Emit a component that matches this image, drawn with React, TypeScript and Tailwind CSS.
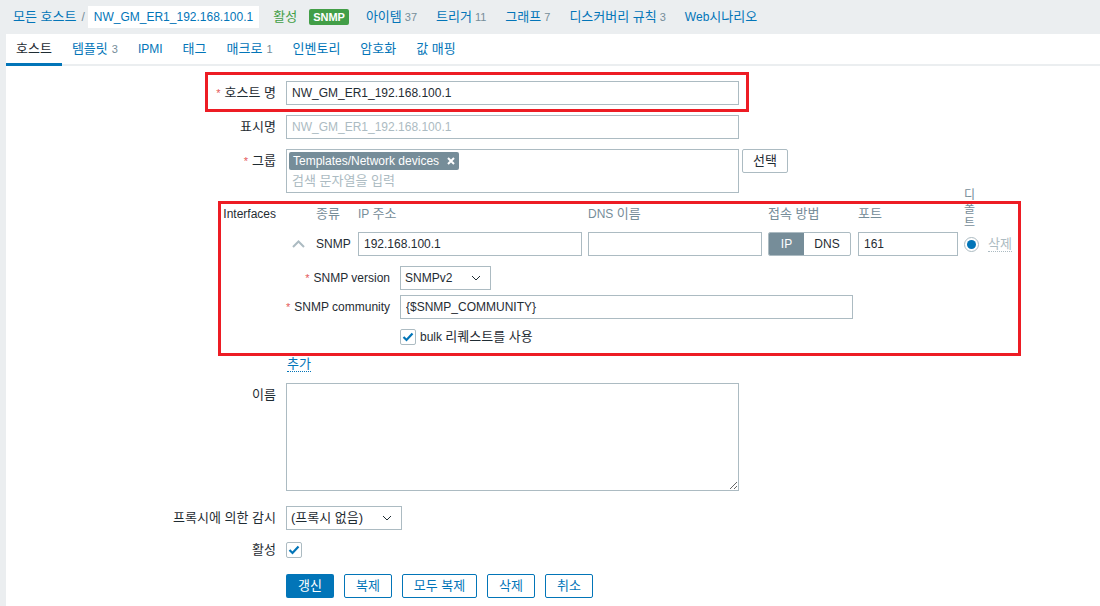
import React from 'react';

// Korean glyphs need to be a touch larger to match the reference widths
const K = ({ children }: { children: React.ReactNode }) => <span className="text-[13px]">{children}</span>;

const Req = () => <span className="text-[#e45959] mr-[4px] text-[11px]">*</span>;

const Row = ({ label, req, children, labelClass = 'pt-[4px]', className = '' }: { label?: React.ReactNode; req?: boolean; children: React.ReactNode; labelClass?: string; className?: string }) => (
  <div className={`flex ${className}`}>
    <div className={`w-[270px] shrink-0 text-right leading-[16px] ${labelClass}`}>
      {req && <Req />}
      {label}
    </div>
    <div className="ml-[10px]">{children}</div>
  </div>
);

const Select = ({ value, width }: { value: React.ReactNode; width: string }) => (
  <div className={`${width} h-[24px] border border-[#acbbc2] bg-white flex items-center justify-between pl-[4px] pr-[9px]`}>
    <span>{value}</span>
    <svg width="10" height="6" viewBox="0 0 10 6">
      <polyline points="1,1 5,5 9,1" fill="none" stroke="#1f2c33" strokeWidth="1" />
    </svg>
  </div>
);

const Check = () => (
  <div className="w-[16px] h-[16px] border border-[#acbbc2] rounded-[2px] bg-white flex items-center justify-center">
    <svg width="12" height="10" viewBox="0 0 12 10">
      <path d="M1.5 5 L4.5 8 L10.5 1.5" fill="none" stroke="#0275b8" strokeWidth="2.2" />
    </svg>
  </div>
);

const navItems: [React.ReactNode, string, string?][] = [
  [<K>아이템</K>, 'items', '37'],
  [<K>트리거</K>, 'triggers', '11'],
  [<K>그래프</K>, 'graphs', '7'],
  [<K>디스커버리 규칙</K>, 'discovery', '3'],
  [<>Web<K>시나리오</K></>, 'web'],
];

const tabs: [string, string?][] = [
  ['호스트'],
  ['템플릿', '3'],
  ['IPMI'],
  ['태그'],
  ['매크로', '1'],
  ['인벤토리'],
  ['암호화'],
  ['값 매핑'],
];

const Btn = ({ children, w, primary }: { children: React.ReactNode; w: string; primary?: boolean }) => (
  <button
    className={`h-[24px] ${w} rounded-[2px] ${primary ? 'bg-[#0275b8] text-white' : 'border border-[#0275b8] text-[#0275b8] bg-white'}`}
  >
    <K>{children}</K>
  </button>
);

export default function App() {
  return (
    <div className="relative w-[1100px] h-[606px] overflow-hidden bg-[#ebeef0] text-[12px] text-[#1f2c33] font-['Liberation_Sans','Noto_Sans_CJK_KR',sans-serif]">
      {/* top bar */}
      <div className="h-[34px] flex items-center pl-[13px]">
        <span className="text-[#0275b8]"><K>모든 호스트</K></span>
        <span className="ml-[5px] mr-[3px] text-[#768d99]">/</span>
        <span className="bg-white h-[22px] flex items-center px-[6px] text-[#0275b8]">NW_GM_ER1_192.168.100.1</span>
        <span className="ml-[14px] text-[#429e47]"><K>활성</K></span>
        <span className="ml-[12px] h-[16px] px-[4px] flex items-center rounded-[2px] bg-[#429e47] text-white font-bold text-[11px]">SNMP</span>
        <div className="ml-[17px] flex items-center gap-[19px]">
          {navItems.map(([name, key, count]) => (
            <span key={key} className="text-[#0275b8]">
              {name}
              {count && <span className="text-[#768d99] ml-[3px] text-[11px]">{count}</span>}
            </span>
          ))}
        </div>
      </div>

      {/* content */}
      <div className="ml-[6px] bg-white h-[572px]">
        <div className="flex h-[32px] border-b-[2px] border-[#ebeef0]">
          {tabs.map(([name, count], i) => (
            <div
              key={name}
              className={`px-[10px] flex items-center ${i === 0 ? 'h-[32px] border-b-[3px] border-[#0275b8] text-[#1f2c33]' : 'h-[30px] text-[#0275b8]'}`}
            >
              {name === 'IPMI' ? name : <K>{name}</K>}
              {count && <span className="text-[#768d99] ml-[4px] text-[11px]">{count}</span>}
            </div>
          ))}
        </div>

        <div className="pt-[15px] flex flex-col">
          <Row label={<K>호스트 명</K>} req>
            <input
              readOnly
              defaultValue="NW_GM_ER1_192.168.100.1"
              className="w-[453px] h-[24px] border border-[#acbbc2] px-[5px] outline-none text-[#1f2c33]"
            />
          </Row>

          <Row label={<K>표시명</K>} className="mt-[10px]">
            <input
              readOnly
              placeholder="NW_GM_ER1_192.168.100.1"
              className="w-[453px] h-[24px] border border-[#acbbc2] px-[5px] outline-none placeholder:text-[#acbbc2]"
            />
          </Row>

          <Row label={<K>그룹</K>} req className="mt-[10px]">
            <div className="flex gap-[3px]">
              <div className="w-[453px] h-[44px] border border-[#acbbc2] px-[2px] pt-[2px]">
                <span className="inline-flex items-center h-[18px] bg-[#768d99] text-white rounded-[2px] px-[4px] gap-[8px]">
                  Templates/Network devices
                  <svg width="8" height="8" viewBox="0 0 8 8">
                    <path d="M1 1 L7 7 M7 1 L1 7" stroke="white" strokeWidth="2" />
                  </svg>
                </span>
                <div className="text-[#acbbc2] mt-[3px] pl-[3px] leading-[16px]"><K>검색 문자열을 입력</K></div>
              </div>
              <button className="h-[24px] px-[10px] border border-[#acbbc2] rounded-[2px] bg-white"><K>선택</K></button>
            </div>
          </Row>

          {/* interfaces */}
          <div className="flex mt-[14px]">
            <div className="w-[270px] shrink-0 text-right leading-[14px]">Interfaces</div>
            <div className="ml-[10px]">
              <div className="flex gap-x-[6px] items-end leading-[14px] text-[#768d99]">
                <div className="w-[24px]" />
                <div className="w-[36px]"><K>종류</K></div>
                <div className="w-[224px]">IP <K>주소</K></div>
                <div className="w-[174px]">DNS <K>이름</K></div>
                <div className="w-[84px]"><K>접속 방법</K></div>
                <div className="w-[100px]"><K>포트</K></div>
                <div className="w-[18px] h-[14px] relative">
                  <span className="absolute left-0 bottom-[-9px] w-[14px] text-[12px] leading-[14px] break-all">디폴트</span>
                </div>
              </div>

              <div className="flex gap-x-[6px] items-center mt-[11px]">
                <div className="w-[24px] flex justify-center">
                  <svg width="13" height="8" viewBox="0 0 13 8">
                    <polyline points="1,7 6.5,1.5 12,7" fill="none" stroke="#acbbc2" strokeWidth="2" />
                  </svg>
                </div>
                <div className="w-[36px]">SNMP</div>
                <input readOnly defaultValue="192.168.100.1" className="w-[224px] h-[24px] border border-[#acbbc2] px-[5px] outline-none" />
                <input readOnly className="w-[174px] h-[24px] border border-[#acbbc2] px-[5px] outline-none" />
                <div className="w-[84px]">
                  <div className="w-[83px] h-[24px] flex border border-[#acbbc2] rounded-[2px] overflow-hidden">
                    <span className="w-[35px] bg-[#768d99] text-white flex items-center justify-center">IP</span>
                    <span className="flex-1 flex items-center justify-center">DNS</span>
                  </div>
                </div>
                <input readOnly defaultValue="161" className="w-[100px] h-[24px] border border-[#acbbc2] px-[5px] outline-none" />
                <div className="w-[18px]">
                  <div className="w-[15px] h-[15px] rounded-full border border-[#acbbc2] flex items-center justify-center">
                    <div className="w-[9px] h-[9px] rounded-full bg-[#0275b8]" />
                  </div>
                </div>
                <span className="text-[#acbbc2] border-b border-dotted border-[#acbbc2] leading-[14px]"><K>삭제</K></span>
              </div>

              <div className="flex items-center mt-[10px]">
                <div className="w-[104px] text-right">
                  <Req />SNMP version
                </div>
                <div className="ml-[10px]">
                  <Select value="SNMPv2" width="w-[91px]" />
                </div>
              </div>

              <div className="flex items-center mt-[5px]">
                <div className="w-[104px] text-right whitespace-nowrap">
                  <Req />SNMP community
                </div>
                <input
                  readOnly
                  defaultValue="{$SNMP_COMMUNITY}"
                  className="ml-[10px] w-[453px] h-[24px] border border-[#acbbc2] px-[5px] outline-none"
                />
              </div>

              <div className="flex items-center mt-[8px] ml-[114px] gap-[4px]">
                <Check />
                <span>bulk <K>리퀘스트를 사용</K></span>
              </div>
            </div>
          </div>

          <Row className="mt-[8px]" labelClass="">
            <span className="ml-[1px] text-[#0275b8] leading-[14px] border-b border-dotted border-[#0275b8] inline-block"><K>추가</K></span>
          </Row>

          <Row label={<K>이름</K>} className="mt-[10px]">
            <textarea readOnly className="w-[453px] h-[108px] border border-[#acbbc2] outline-none block" />
          </Row>

          <Row label={<K>프록시에 의한 감시</K>} className="mt-[15px]">
            <Select value={<K>(프록시 없음)</K>} width="w-[116px]" />
          </Row>

          <Row label={<K>활성</K>} className="mt-[12px]" labelClass="pt-0">
            <Check />
          </Row>

          <Row className="mt-[16px]" labelClass="">
            <div className="flex gap-[10px]">
              <Btn w="w-[48px]" primary>갱신</Btn>
              <Btn w="w-[48px]">복제</Btn>
              <Btn w="w-[75px]">모두 복제</Btn>
              <Btn w="w-[48px]">삭제</Btn>
              <Btn w="w-[48px]">취소</Btn>
            </div>
          </Row>
        </div>
      </div>

      {/* red annotation boxes */}
      <div className="absolute left-[205px] top-[72px] w-[544px] h-[40px] border-[3px] border-[#ed1c24] pointer-events-none" />
      <div className="absolute left-[218px] top-[201px] w-[803px] h-[155px] border-[3px] border-[#ed1c24] pointer-events-none" />
    </div>
  );
}
